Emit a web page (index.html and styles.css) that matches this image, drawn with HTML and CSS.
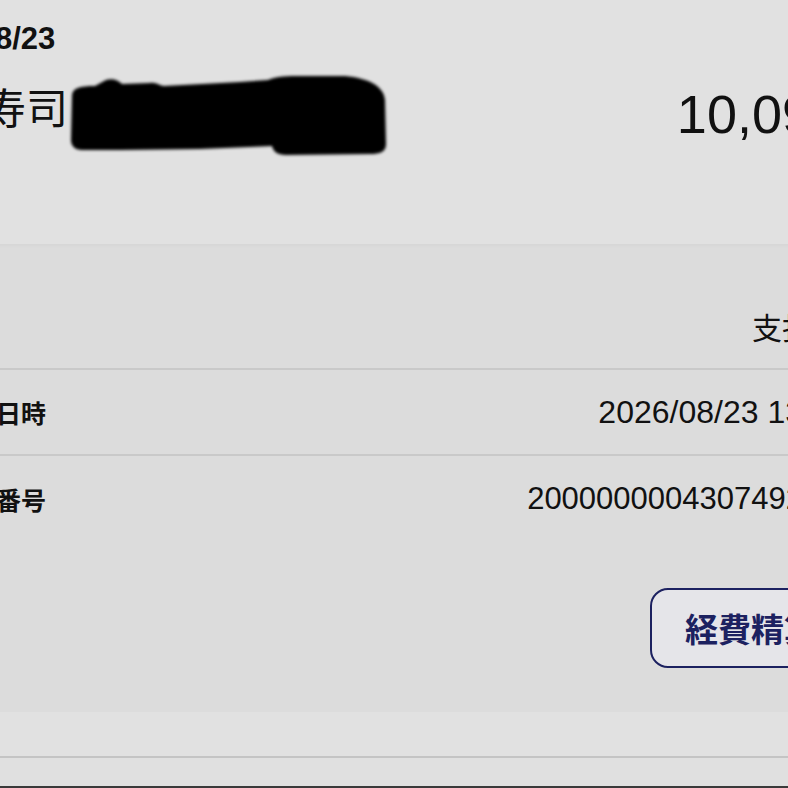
FILE: index.html
```html
<!DOCTYPE html>
<html lang="ja">
<head>
<meta charset="utf-8">
<title>取引詳細</title>
<link rel="stylesheet" href="styles.css">
</head>
<body>
<div class="screen">
  <div class="page">
    <header class="summary">
      <div class="date">8/23</div>
      <div class="merchant-row">
        <div class="merchant">寿司</div>
        <div class="amount">10,09</div>
      </div>
    </header>
    <section class="details">
      <div class="row">
        <span class="value method">支払</span>
      </div>
      <div class="row">
        <span class="label">日時</span>
        <span class="value datetime">2026/08/23 13</span>
      </div>
      <div class="row last">
        <span class="label">番号</span>
        <span class="value number">2000000004307492</span>
      </div>
      <div class="actions">
        <button class="btn">経費精算</button>
      </div>
    </section>
    <div class="band"></div>
    <div class="rest"></div>
  </div>
  <svg class="redact" viewBox="0 0 788 200" width="788" height="200" aria-hidden="true">
    <defs>
      <filter id="soft" x="-5%" y="-20%" width="110%" height="140%">
        <feGaussianBlur stdDeviation="1.6"/>
      </filter>
    </defs>
    <path filter="url(#soft)" fill="#050505" d="M72,96 C72,88 80,86 95,86 L106,80 C112,78 118,80 122,84 L150,83 C156,82 160,86 164,86 L240,82 L268,80 C276,76 290,76 300,76 L345,76 C368,78 384,86 385,100 L386,144 C386,152 380,154 370,154 L286,155 C277,155 273,151 272,146 L200,149 L120,150 L82,150 C75,150 71,146 71,140 Z"/>
  </svg>
</div>
</body>
</html>
```

FILE: styles.css
```css
* {
  box-sizing: border-box;
}

html, body {
  margin: 0;
  padding: 0;
}

body {
  width: 788px;
  height: 788px;
  overflow: hidden;
  background: #e1e1e1;
  font-family: "Liberation Sans", "Noto Sans CJK JP", sans-serif;
  color: #111111;
}

.screen {
  position: relative;
  width: 788px;
  height: 788px;
  overflow: hidden;
}

.page {
  width: 807px;
  margin-left: -4px;
  display: flex;
  flex-direction: column;
}

.summary {
  height: 244px;
  padding-top: 24px;
  background: #e1e1e1;
}

.date {
  margin-left: -1px;
  font-size: 31px;
  line-height: 30px;
  font-weight: 700;
}

.merchant-row {
  margin-top: 32px;
  height: 56px;
  display: flex;
  align-items: center;
  justify-content: space-between;
}

.merchant {
  margin-left: -12px;
  margin-top: -8px;
  font-size: 42px;
  line-height: 42px;
}

.amount {
  margin-right: -9px;
  font-size: 54px;
  line-height: 54px;
}

.details {
  background: #dcdcdc;
  padding-top: 40px;
  padding-bottom: 44px;
  box-shadow: inset 0 3px 4px -2px rgba(0, 0, 0, 0.04);
}

.row {
  height: 86px;
  display: flex;
  align-items: center;
  justify-content: space-between;
  border-bottom: 2px solid #c9c9c9;
}

.row.last {
  border-bottom: none;
}

.label {
  font-size: 25px;
  font-weight: 700;
}

.value {
  margin-left: auto;
  font-size: 31px;
  white-space: nowrap;
}

.datetime {
  font-size: 32px;
}

.method {
  font-size: 30px;
  margin-right: -9px;
}

.actions {
  margin-top: 46px;
  display: flex;
  justify-content: flex-end;
}

.btn {
  height: 80px;
  margin-right: -49px;
  padding: 0 33px;
  border: 2px solid #1c2160;
  border-radius: 18px;
  background: #e5e5e9;
  color: #1c2160;
  font-family: "Noto Sans CJK JP", sans-serif;
  font-size: 33px;
  font-weight: 700;
}

.band {
  height: 46px;
  background: #e1e1e1;
  border-bottom: 2px solid #c4c4c4;
}

.rest {
  height: 30px;
  background: #e0e0e0;
  border-bottom: 2px solid #3a3a3a;
}

.redact {
  position: absolute;
  left: 0;
  top: 0;
}
```
